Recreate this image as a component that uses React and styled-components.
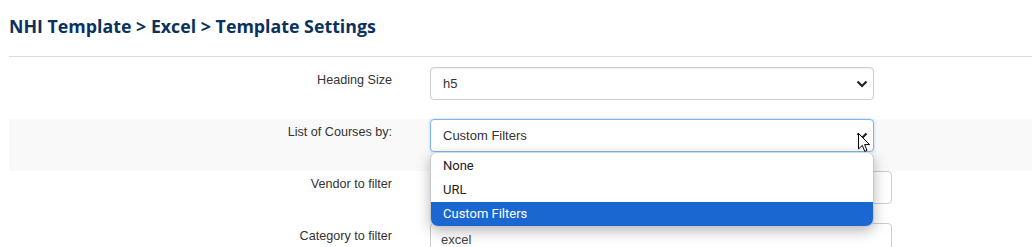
import React from "react";
import styled, { createGlobalStyle } from "styled-components";

const GlobalStyle = createGlobalStyle`
  body {
    margin: 0;
    background: #fff;
    font-family: "Liberation Sans", Arial, sans-serif;
  }
`;

const Page = styled.div`
  padding-left: 9px;
  overflow: hidden;
  height: 247px;
`;

const Title = styled.h1`
  margin: 0;
  padding: 13px 0 0 0;
  height: 43px;
  font-family: "Open Sans", sans-serif;
  font-size: 17.8px;
  font-weight: 700;
  color: #0b325e;
  line-height: 26px;
`;

const Rule = styled.hr`
  margin: 0 0 10px 0;
  border: 0;
  border-top: 1px solid #dcdcdc;
`;

const Row = styled.div`
  display: grid;
  grid-template-columns: 383px auto;
  column-gap: 38px;
  align-items: start;
  padding-bottom: 19px;
  background: ${(p) => (p.shaded ? "#f9f9f9" : "transparent")};
`;

const Label = styled.label`
  text-align: right;
  font-size: 12.6px;
  color: #333;
  padding-top: 6px;
  line-height: 15px;
`;

const Field = styled.div`
  position: relative;
`;

const SelectBox = styled.div`
  box-sizing: border-box;
  width: 444px;
  height: 33px;
  display: flex;
  align-items: center;
  justify-content: space-between;
  padding: 0 5px 0 12px;
  font-size: 13px;
  color: #333;
  background: #fff;
  border: 1px solid ${(p) => (p.focused ? "#7fb5ea" : "#ccc")};
  border-radius: 4px;
  box-shadow: ${(p) =>
    p.focused ? "0 0 3px rgba(102,175,233,0.5)" : "inset 0 1px 1px rgba(0,0,0,0.05)"};
`;

const TextInput = styled.div`
  box-sizing: border-box;
  width: 462px;
  height: 33px;
  display: flex;
  align-items: center;
  padding: 0 10px;
  font-size: 13px;
  color: #444;
  background: #fff;
  border: 1px solid #ccc;
  border-radius: 4px;
`;

const Popup = styled.ul`
  position: absolute;
  top: 34px;
  left: 0;
  width: 444px;
  box-sizing: border-box;
  margin: 0;
  padding: 1px 0 0 0;
  list-style: none;
  background: #fff;
  border: 1px solid #c8c8c8;
  border-top: 0;
  border-radius: 6px 6px 8px 8px;
  overflow: hidden;
  box-shadow: 0 4px 14px rgba(0, 0, 0, 0.28);
  z-index: 5;
`;

const Option = styled.li`
  height: 24px;
  line-height: 24px;
  padding-left: 12px;
  font-family: Roboto, "Noto Sans", sans-serif;
  font-size: 13px;
  font-weight: 400;
  color: ${(p) => (p.selected ? "#fff" : "#222")};
  background: ${(p) => (p.selected ? "#1a67d2" : "transparent")};
`;

const Cursor = styled.svg`
  position: absolute;
  left: 428px;
  top: 14px;
  z-index: 6;
`;

function Chevron() {
  return (
    <svg width="12" height="8" viewBox="0 0 12 8">
      <polyline points="1.5,1.5 6,6 10.5,1.5" fill="none" stroke="#222" strokeWidth="2.2" />
    </svg>
  );
}

export default function App() {
  return (
    <>
      <GlobalStyle />
      <Page>
        <Title>NHI Template &gt; Excel &gt; Template Settings</Title>
        <Rule />
        <Row>
          <Label>Heading Size</Label>
          <Field>
            <SelectBox>
              <span>h5</span>
              <Chevron />
            </SelectBox>
          </Field>
        </Row>
        <Row shaded>
          <Label>List of Courses by:</Label>
          <Field>
            <SelectBox focused>
              <span>Custom Filters</span>
              <Chevron />
            </SelectBox>
            <Cursor width="13" height="20" viewBox="0 0 13 20">
              <path
                d="M0.5 0.5 L0.5 16 L4.3 12.4 L6.8 18.4 L9 17.4 L6.6 11.6 L11.6 11.6 Z"
                fill="#fff"
                stroke="#000"
                strokeWidth="1"
                strokeLinejoin="miter"
              />
            </Cursor>
            <Popup>
              <Option>None</Option>
              <Option>URL</Option>
              <Option selected>Custom Filters</Option>
            </Popup>
          </Field>
        </Row>
        <Row>
          <Label>Vendor to filter</Label>
          <Field>
            <TextInput />
          </Field>
        </Row>
        <Row>
          <Label>Category to filter</Label>
          <Field>
            <TextInput>excel</TextInput>
          </Field>
        </Row>
      </Page>
    </>
  );
}
